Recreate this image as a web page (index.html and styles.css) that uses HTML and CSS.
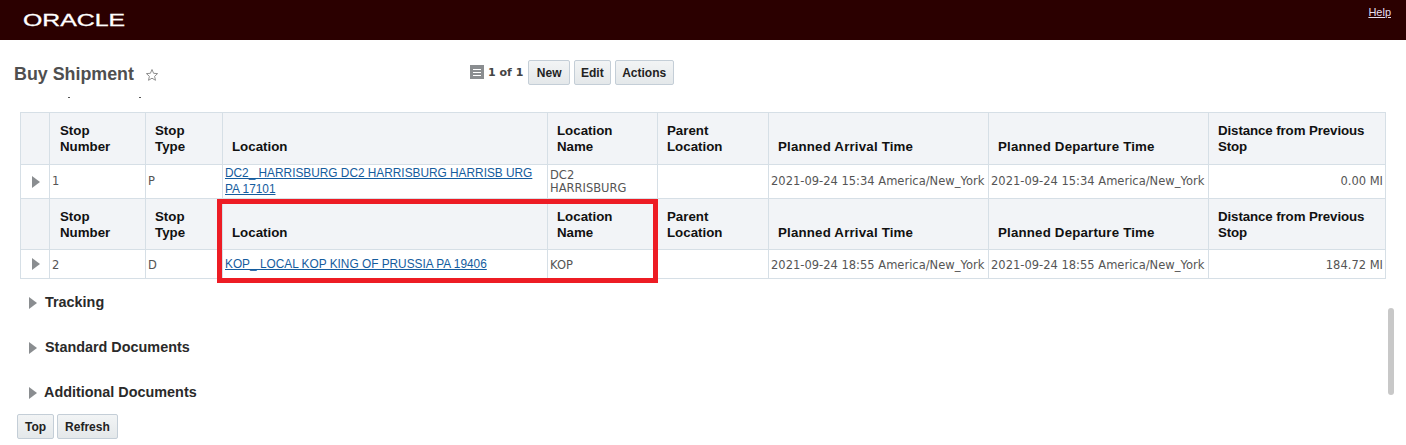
FILE: index.html
```html
<!DOCTYPE html>
<html lang="en">
<head>
    <meta charset="UTF-8">
    <title>Buy Shipment</title>
    <link rel="stylesheet" href="styles.css">
</head>
<body>
    <header class="brand-bar">
        <svg class="logo" width="104" height="22" viewBox="0 0 104 22">
            <text x="0" y="16" textLength="102" lengthAdjust="spacingAndGlyphs">ORACLE</text>
        </svg>
        <a class="help-link" href="#">Help</a>
    </header>

    <div class="title-bar">
        <div class="title-block">
            <h1>Buy Shipment</h1>
            <svg class="star" width="14" height="14" viewBox="0 0 14 14">
                <path d="M7 1.5l1.6 3.8 4 .3-3 2.7.9 4L7 10.2l-3.5 2.1.9-4-3-2.7 4-.3z"/>
            </svg>
        </div>
        <div class="pager">
            <span class="pager-icon"><i></i><i></i><i></i></span>
            <span class="pager-text">1 of 1</span>
            <button class="btn-new">New</button>
            <button class="btn-edit">Edit</button>
            <button>Actions</button>
        </div>
    </div>

    <main class="content">
        <div class="cut-row"><i></i><i></i></div>

        <table class="stops">
            <colgroup>
                <col class="c-arrow"><col class="c-num"><col class="c-type"><col class="c-loc"><col class="c-name">
                <col class="c-parent"><col class="c-time"><col class="c-time"><col class="c-dist">
            </colgroup>
            <tr class="head-row">
                <th></th>
                <th class="th-num">Stop<br>Number</th>
                <th>Stop<br>Type</th>
                <th>Location</th>
                <th>Location<br>Name</th>
                <th>Parent<br>Location</th>
                <th class="th-time">Planned Arrival Time</th>
                <th class="th-time">Planned Departure Time</th>
                <th class="th-dist">Distance from Previous<br>Stop</th>
            </tr>
            <tr class="data-row first">
                <td class="arrow-cell"><span class="arrow"></span></td>
                <td>1</td>
                <td>P</td>
                <td class="link-cell"><a href="#">DC2_ HARRISBURG DC2 HARRISBURG HARRISB URG PA 17101</a></td>
                <td class="name-cell">DC2<br>HARRISBURG</td>
                <td></td>
                <td>2021-09-24 15:34 America/New_York</td>
                <td>2021-09-24 15:34 America/New_York</td>
                <td class="num">0.00 MI</td>
            </tr>
            <tr class="head-row next">
                <th></th>
                <th class="th-num">Stop<br>Number</th>
                <th>Stop<br>Type</th>
                <th>Location</th>
                <th>Location<br>Name</th>
                <th>Parent<br>Location</th>
                <th class="th-time">Planned Arrival Time</th>
                <th class="th-time">Planned Departure Time</th>
                <th class="th-dist">Distance from Previous<br>Stop</th>
            </tr>
            <tr class="data-row second">
                <td class="arrow-cell"><span class="arrow"></span></td>
                <td>2</td>
                <td>D</td>
                <td class="link-cell"><a href="#">KOP_ LOCAL KOP KING OF PRUSSIA PA 19406</a></td>
                <td>KOP</td>
                <td></td>
                <td>2021-09-24 18:55 America/New_York</td>
                <td>2021-09-24 18:55 America/New_York</td>
                <td class="num">184.72 MI</td>
            </tr>
        </table>

        <section class="disclosure"><span class="arrow"></span><h2>Tracking</h2></section>
        <section class="disclosure"><span class="arrow"></span><h2>Standard Documents</h2></section>
        <section class="disclosure last"><span class="arrow"></span><h2>Additional Documents</h2></section>

        <div class="bottom-buttons">
            <button>Top</button>
            <button>Refresh</button>
        </div>

        <div class="highlight"></div>
    </main>

    <div class="scroll-thumb"></div>
</body>
</html>
```

FILE: styles.css
```css
* {
    margin: 0;
    padding: 0;
    box-sizing: border-box;
}

html, body {
    height: 445px;
    overflow: hidden;
}

body {
    position: relative;
    background-color: #fff;
    color: #333;
    font-family: 'Liberation Sans', Arial, sans-serif;
}

/* Header */
.brand-bar {
    height: 40px;
    background-color: #2b0000;
    display: flex;
    justify-content: space-between;
    padding: 10px 15px 0 23px;
}

.logo {
    display: block;
}

.logo text {
    font-family: 'Liberation Sans', Arial, sans-serif;
    font-size: 17px;
    fill: #fff;
    stroke: #fff;
    stroke-width: 0.3;
}

.help-link {
    color: #e6dff0;
    font-size: 11px;
    line-height: 13px;
    margin-top: -4px;
}

/* Title bar */
.title-bar {
    display: flex;
    height: 56px;
    padding: 20px 0 0 14px;
}

.title-block {
    width: 456px;
    display: flex;
    align-items: flex-start;
    padding-top: 3px;
}

.title-block h1 {
    font-size: 17.85px;
    line-height: 22px;
    color: #4f4f4f;
}

.star {
    margin: 5px 0 0 11px;
    fill: #fff;
    stroke: #8f8f8f;
}

.pager {
    display: flex;
    align-items: flex-start;
}

.pager-icon {
    width: 14px;
    height: 14px;
    margin-top: 5px;
    background-color: #8a8d90;
    display: flex;
    flex-direction: column;
    justify-content: center;
    gap: 2px;
    padding: 0 3px;
}

.pager-icon i {
    display: block;
    height: 1px;
    background-color: #fff;
}

.pager-text {
    font-family: 'DejaVu Sans', sans-serif;
    font-size: 11px;
    font-weight: bold;
    line-height: 14px;
    margin: 6px 5px 0 4px;
    color: #444;
}

button {
    height: 25px;
    padding: 0 7px;
    font-family: 'Liberation Sans', Arial, sans-serif;
    font-size: 12px;
    font-weight: bold;
    color: #222;
    background: linear-gradient(#f2f4f5, #e4e8ea);
    border: 1px solid #c4ced7;
    border-radius: 2px;
}

.pager button {
    margin-right: 4px;
    padding: 0 6.5px;
}

.pager .btn-new {
    padding: 0 7.5px;
}

.pager .btn-edit {
    padding: 0 6px;
}

/* Content */
.content {
    position: relative;
    padding: 0 20px;
}

.cut-row {
    height: 16px;
    display: flex;
    gap: 69px;
    padding-left: 48px;
}

.cut-row i {
    display: block;
    width: 2px;
    height: 1px;
    margin-top: 1px;
    background-color: #555;
}

/* Stops table */
.stops {
    width: 1365px;
    table-layout: fixed;
    border-collapse: collapse;
}

.c-arrow { width: 29px; }
.c-num { width: 96px; }
.c-type { width: 77px; }
.c-loc { width: 325px; }
.c-name { width: 110px; }
.c-parent { width: 111px; }
.c-time { width: 220px; }
.c-dist { width: 177px; }

.stops th,
.stops td {
    border: 1px solid #d6dfe6;
}

.stops th {
    background-color: #f2f4f7;
    color: #111;
    font-size: 13.3px;
    line-height: 16px;
    text-align: left;
    vertical-align: bottom;
    padding: 0 9px 9px;
}

.stops th.th-num {
    padding-left: 10px;
}

.stops th.th-time {
    letter-spacing: 0.18px;
}

.stops th.th-dist {
    letter-spacing: -0.1px;
}

.head-row {
    height: 52px;
}

.head-row.next {
    height: 51px;
}

.head-row.next th {
    padding-bottom: 8px;
}

.stops td {
    font-family: 'DejaVu Sans', sans-serif;
    font-size: 11.5px;
    line-height: 13px;
    color: #555;
    padding: 2px;
}

.data-row.first {
    height: 34px;
}

.data-row.second {
    height: 29px;
}

.data-row.second td {
    padding-top: 4px;
}

.stops td.name-cell {
    padding-top: 3px;
}

.stops td.link-cell {
    font-family: 'Liberation Sans', Arial, sans-serif;
    font-size: 11.85px;
    line-height: 16px;
    padding: 0 2px 1px;
}

.link-cell a {
    color: #145c9e;
}

.stops td.num {
    text-align: right;
}

.stops td.arrow-cell {
    padding: 2px 2px 2px 11px;
}

.arrow {
    display: block;
    width: 0;
    height: 0;
    border-left: 8px solid #8a8d90;
    border-top: 6.5px solid transparent;
    border-bottom: 6.5px solid transparent;
}

/* Collapsed sections */
.disclosure {
    display: flex;
    align-items: center;
    gap: 8px;
    height: 45px;
    padding-left: 9px;
}

.disclosure .arrow {
    margin-top: 3px;
}

.disclosure.last {
    gap: 7px;
}

.disclosure h2 {
    font-size: 14.4px;
    line-height: 18px;
    color: #2a2a2a;
}

.bottom-buttons {
    display: flex;
    gap: 3px;
    margin-left: -3px;
}

/* Overlays */
.highlight {
    position: absolute;
    left: 217px;
    top: 103px;
    width: 441px;
    height: 84px;
    border: 5px solid #ed1c24;
}

.scroll-thumb {
    position: absolute;
    left: 1388px;
    top: 308px;
    width: 6px;
    height: 87px;
    border-radius: 3px;
    background-color: #c8c8c8;
}
```
